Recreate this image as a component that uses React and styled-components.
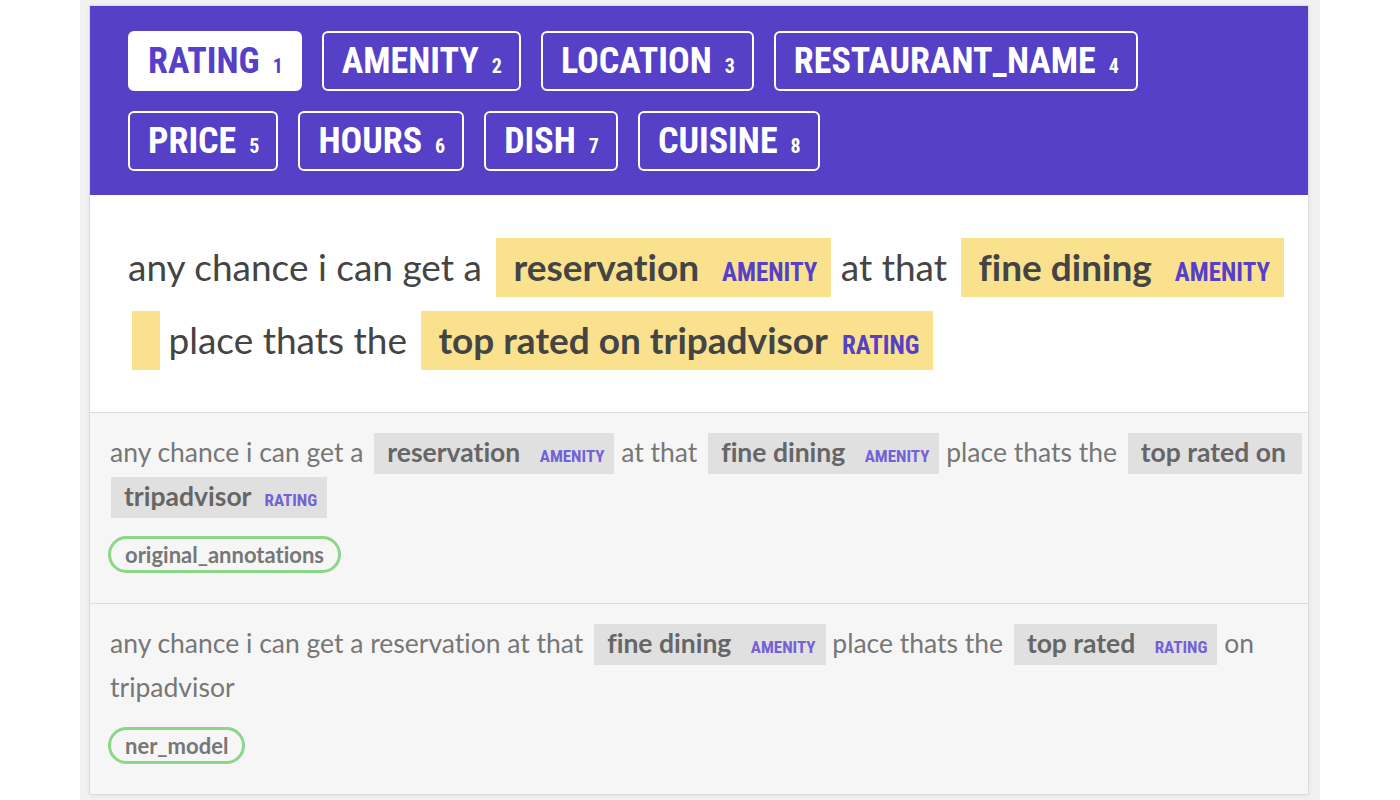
import React from 'react';
import styled, { createGlobalStyle } from 'styled-components';

const GlobalStyle = createGlobalStyle`
  html, body { margin: 0; padding: 0; background: #fff; }
  body {
    font-family: Lato, "Open Sans", sans-serif;
    font-variant-ligatures: none;
  }
  * { box-sizing: border-box; }
`;

const PURPLE = '#5540c7';

const Page = styled.div`
  width: 1240px;
  height: 800px;
  margin: 0 auto;
  padding: 6px 12px 0 10px;
  background: #f1f1f1;
  overflow: hidden;
`;

const Card = styled.div`
  background: #fff;
  box-shadow: 0 0 0 1px #dcdcdc, 0 1px 6px rgba(0, 0, 0, 0.08);
`;

const Header = styled.div`
  background: ${PURPLE};
  padding: 25px 30px 24px 38px;
  display: flex;
  flex-wrap: wrap;
  gap: 20px 20px;
`;

const LabelButton = styled.button`
  display: inline-flex;
  align-items: baseline;
  gap: 13px;
  height: 60px;
  padding: 10px 17px 0 18px;
  border: 2px solid #fff;
  border-radius: 6px;
  background: ${(p) => (p.$active ? '#fff' : 'transparent')};
  color: ${(p) => (p.$active ? PURPLE : '#fff')};
  font-family: Roboto, "Liberation Sans", sans-serif;
  font-stretch: 75%;
  font-weight: 700;
  font-size: 36px;
  line-height: 36px;
  cursor: pointer;
`;

const KeyNum = styled.span`
  font-size: 20px;
  line-height: 20px;
`;

const MainText = styled.div`
  padding: 35px 14px 36px 38px;
  font-family: Lato, sans-serif;
  font-size: 37px;
  line-height: 73px;
  color: #444;
  background: #fff;
`;

const Mark = styled.span`
  display: inline-block;
  vertical-align: baseline;
  height: ${(p) => (p.$muted ? '41px' : '59px')};
  background: ${(p) => (p.$muted ? '#e0e0e0' : '#fae18e')};
  color: ${(p) => (p.$muted ? '#666' : '#444')};
  font-weight: 700;
  line-height: ${(p) => (p.$muted ? '29px' : '37px')};
  padding: ${(p) => (p.$muted ? '5px 10px 7px 13px' : '10px 14px 12px 17px')};
  margin-right: 0;
  margin-left: ${(p) => (p.$flush ? '1px' : p.$muted ? '4px' : '5px')};
  white-space: nowrap;
`;

const Spill = styled.span`
  display: inline-block;
  vertical-align: -16px;
  width: 28px;
  height: 59px;
  background: #fae18e;
  margin: 0 -1px 0 4px;
`;

const EntLabel = styled.span`
  font-family: Roboto, "Liberation Sans", sans-serif;
  font-stretch: 75%;
  font-weight: 700;
  text-transform: uppercase;
  font-size: ${(p) => (p.$muted ? '17px' : '25px')};
  color: ${(p) => (p.$muted ? '#7362d6' : PURPLE)};
  margin-left: ${(p) => (p.$muted ? '13px' : '14px')};
`;

const Alt = styled.div`
  display: flex;
  flex-direction: column;
  align-items: flex-start;
  border-top: 1px solid #dcdcdc;
  background: #f6f6f6;
  padding: 17px 4px 30px 20px;
`;

const AltText = styled.div`
  font-family: Lato, sans-serif;
  font-size: 26.5px;
  line-height: 44px;
  color: #777;
`;

const SourceTag = styled.span`
  margin-top: 18px;
  margin-left: -2px;
  height: 37px;
  padding: 0 14px;
  border: 3px solid #8ad787;
  border-radius: 20px;
  font-family: Lato, sans-serif;
  font-weight: 700;
  font-size: 22px;
  line-height: 31px;
  color: #777;
`;

const labels = ['RATING', 'AMENITY', 'LOCATION', 'RESTAURANT_NAME', 'PRICE', 'HOURS', 'DISH', 'CUISINE'];

const Ent = ({ text, label, muted, flush }) => (
  <Mark $muted={muted} $flush={flush}>
    {text}
    {label && <EntLabel $muted={muted}>{label}</EntLabel>}
  </Mark>
);

export default function App() {
  return (
    <>
      <GlobalStyle />
      <Page>
        <Card>
          <Header>
            {labels.map((l, i) => (
              <LabelButton key={l} $active={i === 0}>
                {l}
                <KeyNum>{i + 1}</KeyNum>
              </LabelButton>
            ))}
          </Header>

          <MainText>
            any chance i can get a <Ent text="reservation " label="amenity" /> at that{' '}
            <Ent text="fine dining " label="amenity" />
            <br />
            <Spill /> place thats the <Ent text="top rated on tripadvisor" label="rating" />
          </MainText>

          <Alt>
            <AltText>
              any chance i can get a <Ent muted text="reservation " label="amenity" /> at that{' '}
              <Ent muted text="fine dining " label="amenity" /> place thats the{' '}
              <Ent muted text={'top rated on\u00a0'} />
              <br />
              <Ent muted flush text="tripadvisor" label="rating" />
            </AltText>
            <SourceTag>original_annotations</SourceTag>
          </Alt>

          <Alt>
            <AltText>
              any chance i can get a reservation at that <Ent muted text="fine dining " label="amenity" /> place
              thats the <Ent muted text="top rated " label="rating" /> on tripadvisor
            </AltText>
            <SourceTag>ner_model</SourceTag>
          </Alt>
        </Card>
      </Page>
    </>
  );
}
